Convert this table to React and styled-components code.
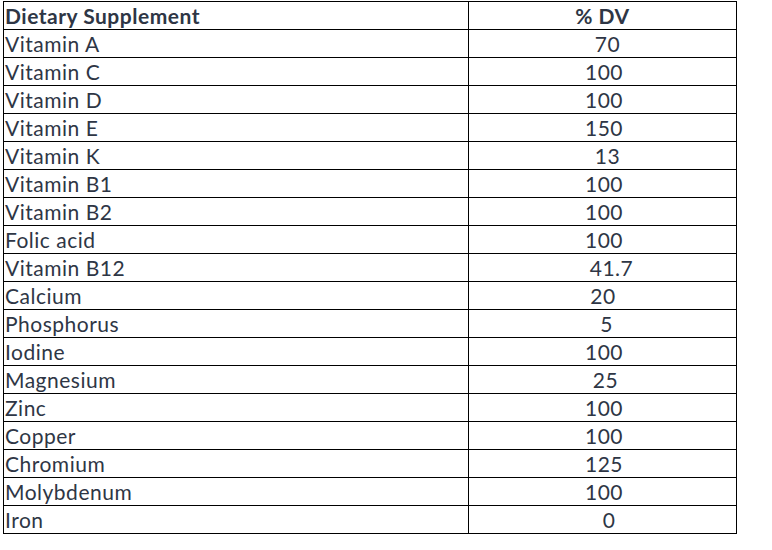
import React from 'react'
import styled, { createGlobalStyle } from 'styled-components'

const GlobalStyle = createGlobalStyle`
  body {
    margin: 0;
    background: #ffffff;
    font-family: Lato, "Open Sans", sans-serif;
  }
`

const Page = styled.div`
  padding: 1px 0 0 3px;
`

const Table = styled.table`
  width: 734px;
  border-collapse: collapse;
  table-layout: fixed;
  color: #2e3645;
  font-family: Lato, sans-serif;
  font-size: 21px;
  letter-spacing: 0.5px;
`

const Row = styled.tr`
  height: 28px;
`

const NameCell = styled.td`
  width: 463px;
  border: 1px solid #000;
  padding: 0 0 0 1px;
  line-height: 26px;
  text-align: left;
  font-weight: ${({ $head }) => ($head ? 700 : 400)};
  white-space: nowrap;
`

const ValueCell = styled.td`
  border: 1px solid #000;
  padding: 0 0 0 ${({ $shift }) => $shift * 2}px;
  line-height: 26px;
  text-align: center;
  font-weight: ${({ $head }) => ($head ? 700 : 400)};
  white-space: nowrap;
`

const rows = [
  ['Vitamin A', '70', 5],
  ['Vitamin C', '100', 1.5],
  ['Vitamin D', '100', 1.5],
  ['Vitamin E', '150', 1.5],
  ['Vitamin K', '13', 5],
  ['Vitamin B1', '100', 1.5],
  ['Vitamin B2', '100', 1.5],
  ['Folic acid', '100', 1.5],
  ['Vitamin B12', '41.7', 9],
  ['Calcium', '20', 0.5],
  ['Phosphorus', '5', 4],
  ['Iodine', '100', 1.5],
  ['Magnesium', '25', 3],
  ['Zinc', '100', 1.5],
  ['Copper', '100', 1.5],
  ['Chromium', '125', 1.5],
  ['Molybdenum', '100', 1.5],
  ['Iron', '0', 6.5],
]

export default function App() {
  return (
    <>
      <GlobalStyle />
      <Page>
        <Table>
          <tbody>
            <Row>
              <NameCell $head>Dietary Supplement</NameCell>
              <ValueCell $head $shift={0}>% DV</ValueCell>
            </Row>
            {rows.map(([name, value, shift]) => (
              <Row key={name}>
                <NameCell>{name}</NameCell>
                <ValueCell $shift={shift}>{value}</ValueCell>
              </Row>
            ))}
          </tbody>
        </Table>
      </Page>
    </>
  )
}
